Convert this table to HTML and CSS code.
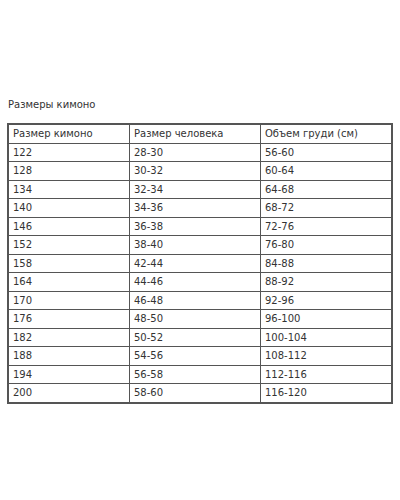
FILE: index.html
```html
<!DOCTYPE html>
<html lang="ru">
<head>
<meta charset="utf-8">
<link rel="stylesheet" href="styles.css">
</head>
<body>
<div class="page">
  <p class="title">Размеры кимоно</p>
  <table class="sizes">
    <tr><td>Размер кимоно</td><td>Размер человека</td><td>Объем груди (см)</td></tr>
    <tr><td>122</td><td>28-30</td><td>56-60</td></tr>
    <tr><td>128</td><td>30-32</td><td>60-64</td></tr>
    <tr><td>134</td><td>32-34</td><td>64-68</td></tr>
    <tr><td>140</td><td>34-36</td><td>68-72</td></tr>
    <tr><td>146</td><td>36-38</td><td>72-76</td></tr>
    <tr><td>152</td><td>38-40</td><td>76-80</td></tr>
    <tr><td>158</td><td>42-44</td><td>84-88</td></tr>
    <tr><td>164</td><td>44-46</td><td>88-92</td></tr>
    <tr><td>170</td><td>46-48</td><td>92-96</td></tr>
    <tr><td>176</td><td>48-50</td><td>96-100</td></tr>
    <tr><td>182</td><td>50-52</td><td>100-104</td></tr>
    <tr><td>188</td><td>54-56</td><td>108-112</td></tr>
    <tr><td>194</td><td>56-58</td><td>112-116</td></tr>
    <tr><td>200</td><td>58-60</td><td>116-120</td></tr>
  </table>
</div>
</body>
</html>
```
FILE: styles.css
```css
html, body {
  margin: 0;
  padding: 0;
  background: #ffffff;
}
.page {
  padding: 98px 0 0 7px;
  font-family: "DejaVu Sans", Verdana, sans-serif;
  font-size: 10px;
  color: #333333;
}
.title {
  margin: 0 0 11px 1px;
  line-height: 14px;
}
.sizes {
  border-collapse: collapse;
  width: 386px;
  border: 2px solid #555555;
}
.sizes td {
  border: 1px solid #555555;
  padding: 0 4px;
  height: 17.5px;
  line-height: 17px;
  vertical-align: middle;
  text-align: left;
}
.sizes td:nth-child(1) { width: 112px; }
.sizes td:nth-child(2) { width: 122px; }
```
